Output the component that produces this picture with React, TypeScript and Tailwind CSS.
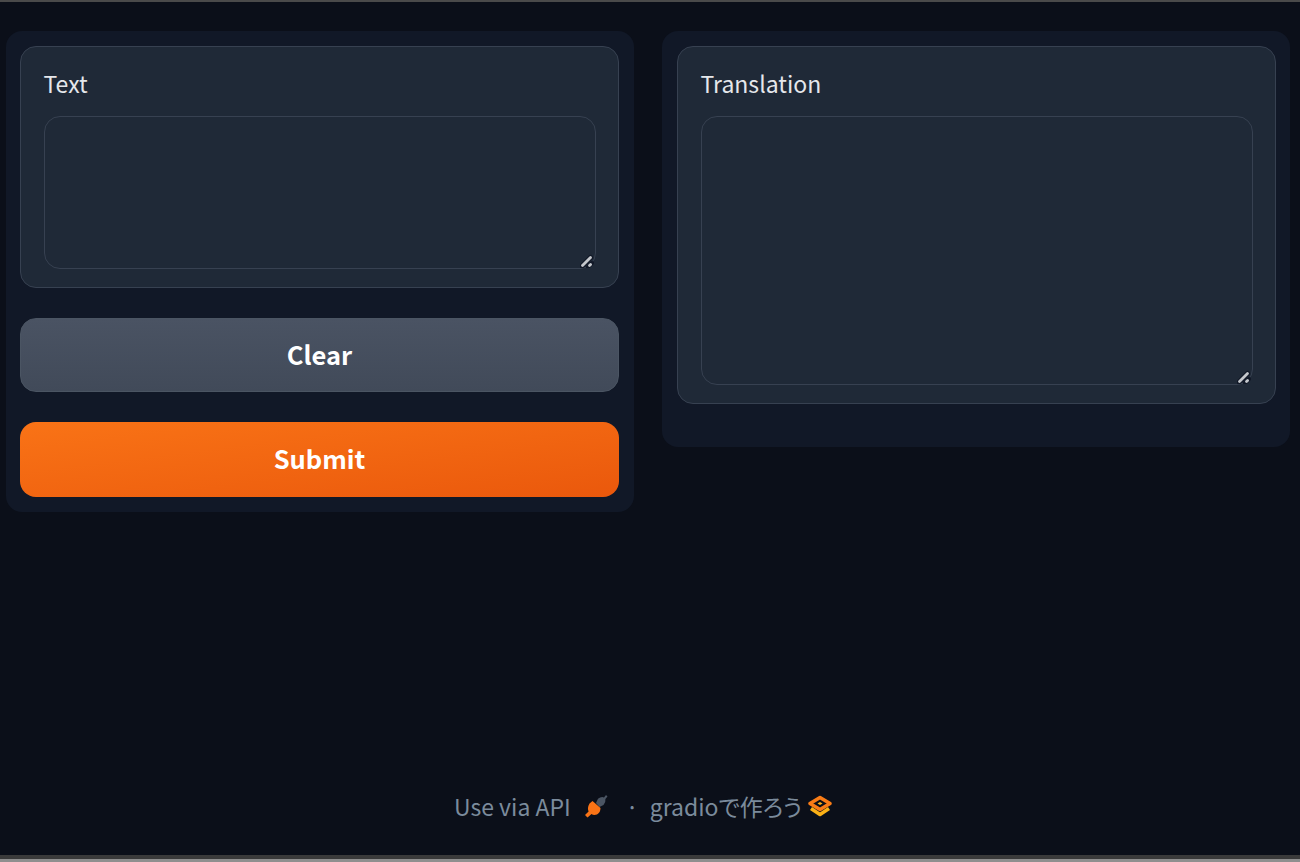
const FONT = "font-['Noto_Sans_CJK_JP','Noto_Sans',sans-serif]";

function ResizeGrip() {
  return (
    <svg className="absolute right-[1px] bottom-[0px] w-[14px] h-[14px]" viewBox="0 0 14 14">
      <path d="M2 12 L10.5 3.5" stroke="#111827" strokeWidth="5" strokeLinecap="round" />
      <path d="M8 13 L12 9" stroke="#111827" strokeWidth="4" strokeLinecap="round" />
      <path d="M2.5 11.5 L10.5 3.5" stroke="#c4c7cc" strokeWidth="2.8" strokeLinecap="round" />
      <path d="M9.5 11.5 L10.6 10.4" stroke="#c4c7cc" strokeWidth="2.8" strokeLinecap="round" />
    </svg>
  );
}

function Field({ label, height }: { label: string; height: string }) {
  return (
    <div className="rounded-[16px] border border-[#374151] bg-[#1f2937] px-[22.5px] pt-[18px] pb-[18px]">
      <div className="h-[51px] text-[23px] leading-[36px] text-[#e5e7eb]">{label}</div>
      <div className={`relative ${height} rounded-[16px] border border-[#374151] bg-[#1f2937]`}>
        <ResizeGrip />
      </div>
    </div>
  );
}

function PlugIcon() {
  return (
    <svg className="w-[24px] h-[24px]" viewBox="0 0 24 24">
      <path d="M12 9 L14 4.8 Q17 2.4 20 3.4 L22 1 L23.5 2.4 L21.4 5 Q22 8 19.5 11 L15.5 13 Z" fill="#4b5563" />
      <path d="M5.5 9.5 L8.5 7 L16.5 14 Q16.5 18.5 13 20.5 Q9.5 21.5 7.5 20 L3.5 23.5 L1 21 L4.6 17.5 Q3 14 5.5 9.5 Z" fill="#f97316" />
    </svg>
  );
}

function GradioLogo() {
  return (
    <svg className="w-[26px] h-[24px]" viewBox="0 0 26 24" fill="none" strokeLinejoin="round">
      <path d="M13 3.5 L23 9.5 L13 15.5 L3 9.5 Z" stroke="#f97c16" strokeWidth="3.6" />
      <path d="M4 14.5 L13 20.5 L22 14.5" stroke="#fbb116" strokeWidth="3.6" />
      <path d="M10.5 9.5 L13 8 L15.5 9.5 L13 11 Z" fill="#fbb116" />
    </svg>
  );
}

export default function App() {
  return (
    <div className={`${FONT} flex flex-col w-[1300px] h-[862px] bg-[#0b0f19] overflow-hidden`}>
      <div className="h-[2px] shrink-0 bg-[#4a4a4a]" />

      <main className="flex items-start gap-[28px] pl-[6px] pr-[10px] pt-[29px]">
        <section className="flex-1 flex flex-col gap-[30px] rounded-[16px] bg-[#111827] pl-[14px] pr-[15px] py-[15px]">
          <Field label="Text" height="h-[153px]" />
          <button className="h-[74px] pb-[2px] rounded-[16px] border border-[#4b5563] bg-gradient-to-b from-[#4a5363] to-[#414a59] text-[25.5px] font-semibold text-white">
            Clear
          </button>
          <button className="h-[75px] pb-[2px] rounded-[16px] bg-gradient-to-br from-[#f97316] to-[#ea580c] text-[25.5px] font-semibold text-white">
            Submit
          </button>
        </section>

        <section className="flex-1 flex flex-col rounded-[16px] bg-[#111827] pl-[15px] pr-[14px] pt-[15px] pb-[43px]">
          <Field label="Translation" height="h-[269px]" />
        </section>
      </main>

      <footer className="mt-auto flex items-center justify-center pb-[31px] pr-[13px] text-[23px] leading-[36px] text-[#7b8b9c]">
        <span>Use via API</span>
        <span className="ml-[13px]">
          <PlugIcon />
        </span>
        <span className="ml-[18px]">·</span>
        <span className="ml-[11px] [font-feature-settings:'palt']">gradioで作ろう</span>
        <span className="ml-[5px]">
          <GradioLogo />
        </span>
      </footer>

      <div className="h-[4px] shrink-0 bg-[#3a3a3a]" />
      <div className="h-[3px] shrink-0 bg-[#8f8f8f]" />
    </div>
  );
}
